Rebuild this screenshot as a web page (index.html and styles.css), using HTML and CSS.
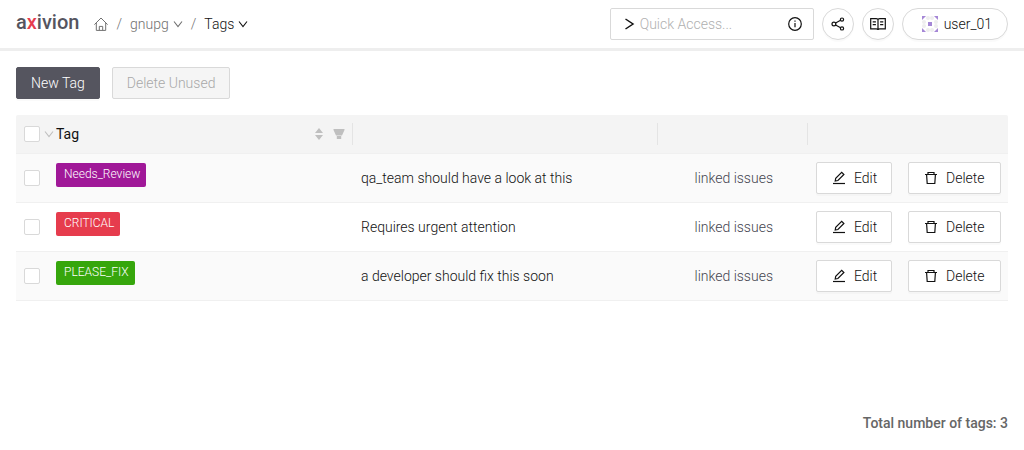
FILE: index.html
```html
<!DOCTYPE html>
<html lang="en">
<head>
    <meta charset="UTF-8">
    <meta name="viewport" content="width=device-width, initial-scale=1.0">
    <title>Tags - gnupg</title>
    <link rel="stylesheet" href="styles.css">
</head>
<body>
    <!-- Shared icons -->
    <svg class="icon-defs" aria-hidden="true">
        <symbol id="icon-down" viewBox="0 0 10 10"><path d="M1 2.5l4 5 4-5"/></symbol>
        <symbol id="icon-edit" viewBox="0 0 14 14">
            <path d="M1 12.5h12"/>
            <path d="M3.2 10l.5-2.7 6-6 2.2 2.2-6 6z"/>
        </symbol>
        <symbol id="icon-delete" viewBox="0 0 14 14">
            <path d="M1 3.5h12M4 3.4V1.5h6v1.9M2.6 3.8l.6 8.7h7.6l.6-8.7"/>
        </symbol>
    </svg>

    <header class="top-bar">
        <a href="#" class="logo">a<span class="logo-x">x</span>ivion</a>

        <nav class="breadcrumb" aria-label="Breadcrumb">
            <a href="#" class="crumb" aria-label="Home">
                <svg class="icon icon-home" viewBox="0 0 14 14"><path d="M.4 7.6L7 1l6.6 6.6M2.3 6v7.4h9.4V6M5.3 13.3V9.4h3.4v3.9"/></svg>
            </a>
            <span class="separator">/</span>
            <a href="#" class="crumb">gnupg <svg class="icon icon-small"><use href="#icon-down"/></svg></a>
            <span class="separator">/</span>
            <a href="#" class="crumb current">Tags <svg class="icon icon-small"><use href="#icon-down"/></svg></a>
        </nav>

        <div class="top-actions">
            <div class="quick-access">
                <svg class="icon icon-prompt" viewBox="0 0 14 14"><path d="M3.5 2L11 7l-7.5 5"/></svg>
                <input type="text" class="quick-input" placeholder="Quick Access..." aria-label="Quick Access">
                <svg class="icon icon-info" viewBox="0 0 14 14"><circle cx="7" cy="7" r="6.3"/><path d="M7 6v4.3M7 3.6v1.2"/></svg>
            </div>
            <button type="button" class="round-button" aria-label="Share">
                <svg class="icon" viewBox="0 0 14 14"><circle cx="2.9" cy="7" r="1.9"/><circle cx="11" cy="2.6" r="1.6"/><circle cx="11" cy="11.4" r="1.6"/><path d="M4.6 6l5-2.7M4.6 8l5 2.7"/></svg>
            </button>
            <button type="button" class="round-button" aria-label="Documentation">
                <svg class="icon icon-book" viewBox="0 0 16 14"><path d="M.7 1.6h5.6Q8 1.6 8 2.8q0-1.2 1.7-1.2h5.6v10.2H9.7Q8 11.8 8 13q0-1.2-1.7-1.2H.7zM8 2.8V13M2.7 4.8h3.2M2.7 7.6h3.2M10.1 4.8h3.2M10.1 7.6h3.2"/></svg>
            </button>
            <button type="button" class="user-button">
                <svg class="avatar" viewBox="0 0 16 16">
                    <g fill="#eeeeee">
                        <circle cx="6" cy="2" r="2"/><circle cx="10" cy="2" r="2"/>
                        <circle cx="6" cy="14" r="2"/><circle cx="10" cy="14" r="2"/>
                        <circle cx="2" cy="6" r="2"/><circle cx="2" cy="10" r="2"/>
                        <circle cx="14" cy="6" r="2"/><circle cx="14" cy="10" r="2"/>
                    </g>
                    <path fill="#a587d6" d="M0 0h4L0 4zM12 0h4v4zM0 12l4 4H0zM16 12v4h-4z"/>
                    <path fill="#a587d6" d="M6 6h4v4H6z"/>
                </svg>
                user_01
            </button>
        </div>
    </header>

    <main class="content">
        <div class="toolbar">
            <button type="button" class="button primary">New Tag</button>
            <button type="button" class="button" disabled>Delete Unused</button>
        </div>

        <table class="tag-table">
            <colgroup>
                <col class="col-select">
                <col class="col-tag">
                <col>
                <col class="col-issues">
                <col class="col-actions">
            </colgroup>
            <thead>
                <tr>
                    <th>
                        <div class="select-all">
                            <input type="checkbox" class="checkbox" aria-label="Select all tags">
                            <svg class="icon icon-small"><use href="#icon-down"/></svg>
                        </div>
                    </th>
                    <th class="tag-heading">
                        <div class="column-title">
                            <span>Tag</span>
                            <svg class="sorter" viewBox="0 0 8 12"><path d="M4 0l4 5H0zM4 12l4-5H0z"/></svg>
                            <svg class="filter" viewBox="0 0 12 12"><path d="M.5 1h11v1L9 7.5H3L.5 2zM3.8 8h4.4v3H3.8z"/></svg>
                        </div>
                    </th>
                    <th></th>
                    <th></th>
                    <th></th>
                </tr>
            </thead>
            <tbody>
                <tr>
                    <td><input type="checkbox" class="checkbox" aria-label="Select Needs_Review"></td>
                    <td class="tag-cell"><span class="tag tag-purple">Needs_Review</span></td>
                    <td>qa_team should have a look at this</td>
                    <td class="issues-cell"><a href="#" class="issues-link">linked issues</a></td>
                    <td>
                        <div class="row-actions">
                            <button type="button" class="button"><svg class="icon"><use href="#icon-edit"/></svg>Edit</button>
                            <button type="button" class="button"><svg class="icon"><use href="#icon-delete"/></svg>Delete</button>
                        </div>
                    </td>
                </tr>
                <tr>
                    <td><input type="checkbox" class="checkbox" aria-label="Select CRITICAL"></td>
                    <td class="tag-cell"><span class="tag tag-red">CRITICAL</span></td>
                    <td>Requires urgent attention</td>
                    <td class="issues-cell"><a href="#" class="issues-link">linked issues</a></td>
                    <td>
                        <div class="row-actions">
                            <button type="button" class="button"><svg class="icon"><use href="#icon-edit"/></svg>Edit</button>
                            <button type="button" class="button"><svg class="icon"><use href="#icon-delete"/></svg>Delete</button>
                        </div>
                    </td>
                </tr>
                <tr>
                    <td><input type="checkbox" class="checkbox" aria-label="Select PLEASE_FIX"></td>
                    <td class="tag-cell"><span class="tag tag-green">PLEASE_FIX</span></td>
                    <td>a developer should fix this soon</td>
                    <td class="issues-cell"><a href="#" class="issues-link">linked issues</a></td>
                    <td>
                        <div class="row-actions">
                            <button type="button" class="button"><svg class="icon"><use href="#icon-edit"/></svg>Edit</button>
                            <button type="button" class="button"><svg class="icon"><use href="#icon-delete"/></svg>Delete</button>
                        </div>
                    </td>
                </tr>
            </tbody>
        </table>
    </main>

    <footer class="total">Total number of tags: 3</footer>
</body>
</html>
```
FILE: styles.css
```css
* {
    box-sizing: border-box;
}

body {
    display: flex;
    flex-direction: column;
    min-height: 100vh;
    margin: 0;
    background-color: #fff;
    color: #111;
    font-family: Roboto, "Liberation Sans", sans-serif;
    font-size: 14px;
    font-weight: 300;
    line-height: 22px;
}

a {
    color: inherit;
    text-decoration: none;
}

button,
input {
    font: inherit;
    color: inherit;
}

button {
    cursor: pointer;
}

.icon-defs {
    display: none;
}

.icon {
    flex: none;
    width: 14px;
    height: 14px;
    fill: none;
    stroke: currentColor;
    stroke-width: 1.2;
}

.icon-small {
    width: 10px;
    height: 10px;
    stroke-width: 1.1;
}

/* Top bar */
.top-bar {
    display: flex;
    align-items: center;
    height: 51px;
    padding: 0 16px;
    border-bottom: 3px solid #eee;
}

.logo {
    padding-bottom: 4px;
    color: #55555f;
    font-size: 20px;
    font-weight: 500;
}

.logo-x {
    color: #e63c4d;
}

.breadcrumb {
    display: flex;
    align-items: center;
    gap: 8px;
    margin-left: 15px;
    color: #707070;
}

.crumb {
    display: flex;
    align-items: center;
    gap: 4px;
}

.current {
    color: #111;
}

.icon-home {
    stroke-width: 1;
}

.top-actions {
    display: flex;
    gap: 8px;
    margin-left: auto;
}

.quick-access {
    display: flex;
    align-items: center;
    width: 204px;
    height: 32px;
    padding: 0 11px;
    border: 1px solid #d9d9d9;
    border-radius: 2px;
}

.icon-prompt {
    stroke-width: 1.5;
}

.quick-input {
    flex: 1;
    min-width: 0;
    padding: 0 4px;
    border: none;
    outline: none;
    background: none;
}

.quick-input::placeholder {
    color: #b0b0b0;
}

.round-button,
.user-button {
    display: flex;
    align-items: center;
    justify-content: center;
    height: 32px;
    border: 1px solid #d9d9d9;
    border-radius: 16px;
    background-color: #fff;
    box-shadow: 0 2px 0 rgba(0, 0, 0, 0.02);
}

.round-button {
    width: 32px;
    padding: 0;
}

.icon-book {
    width: 16px;
}

.user-button {
    gap: 6px;
    padding: 0 15px 0 19px;
}

.avatar {
    width: 16px;
    height: 16px;
}

/* Content */
.content {
    flex: 1;
    padding: 16px;
}

.toolbar {
    display: flex;
    gap: 12px;
    margin-bottom: 16px;
}

.button {
    display: flex;
    align-items: center;
    gap: 8px;
    height: 32px;
    padding: 0 15px;
    border: 1px solid #d9d9d9;
    border-radius: 2px;
    background-color: #fff;
    box-shadow: 0 2px 0 rgba(0, 0, 0, 0.02);
}

.toolbar .button {
    padding: 0 14px;
}

.button.primary {
    border-color: #55555f;
    background-color: #55555f;
    color: #fff;
}

.button:disabled {
    background-color: #f5f5f5;
    color: #a8a8a8;
    box-shadow: none;
    cursor: not-allowed;
}

/* Table */
.tag-table {
    width: 100%;
    table-layout: fixed;
    border-collapse: separate;
    border-spacing: 0;
}

.col-select {
    width: 40px;
}

.col-tag {
    width: 297px;
}

.col-issues {
    width: 150px;
}

.col-actions {
    width: 200px;
}

th {
    height: 39px;
    padding: 0 0 0 8px;
    border-bottom: 1px solid #f0f0f0;
    background: #f4f4f4;
    font-weight: 400;
    text-align: left;
}

/* Short divider between the header cells */
th:nth-child(n+2):not(:last-child) {
    background: linear-gradient(#e4e4e4, #e4e4e4) right center / 1px 22px no-repeat #f4f4f4;
}

th:first-child {
    border-top-left-radius: 2px;
}

th:last-child {
    border-top-right-radius: 2px;
}

.select-all {
    display: flex;
    align-items: center;
    gap: 4px;
    color: #bfbfbf;
}

.tag-table .tag-heading {
    padding: 0 8px 0 0;
}

.column-title {
    display: flex;
    align-items: center;
    gap: 10px;
}

.column-title span {
    flex: 1;
}

.sorter,
.filter {
    height: 12px;
    fill: #bfbfbf;
}

.sorter {
    width: 8px;
}

.filter {
    width: 12px;
}

td {
    height: 49px;
    padding: 0 0 0 8px;
    border-bottom: 1px solid #f0f0f0;
}

tbody tr:nth-child(odd) {
    background-color: #fafafa;
}

.checkbox {
    display: block;
    appearance: none;
    width: 16px;
    height: 16px;
    margin: 0;
    border: 1px solid #d9d9d9;
    border-radius: 2px;
    background-color: #fff;
}

.checkbox:checked {
    background-color: #55555f;
}

.tag-cell {
    padding: 9px 0 0;
    vertical-align: top;
}

.tag {
    display: inline-block;
    height: 24px;
    padding: 0 6px 0 8px;
    border-radius: 2px;
    color: #fff;
    font-size: 12px;
    vertical-align: top;
}

.tag-purple {
    background-color: #a01898;
}

.tag-red {
    background-color: #e63c4d;
}

.tag-green {
    background-color: #36a60c;
}

.issues-cell {
    padding-right: 35px;
    text-align: right;
}

.issues-link {
    color: #44444e;
}

.row-actions {
    display: grid;
    grid-template-columns: 76px 93px;
    gap: 16px;
}

.total {
    padding: 0 16px 16px;
    color: #666;
    font-weight: 500;
    text-align: right;
}
```
